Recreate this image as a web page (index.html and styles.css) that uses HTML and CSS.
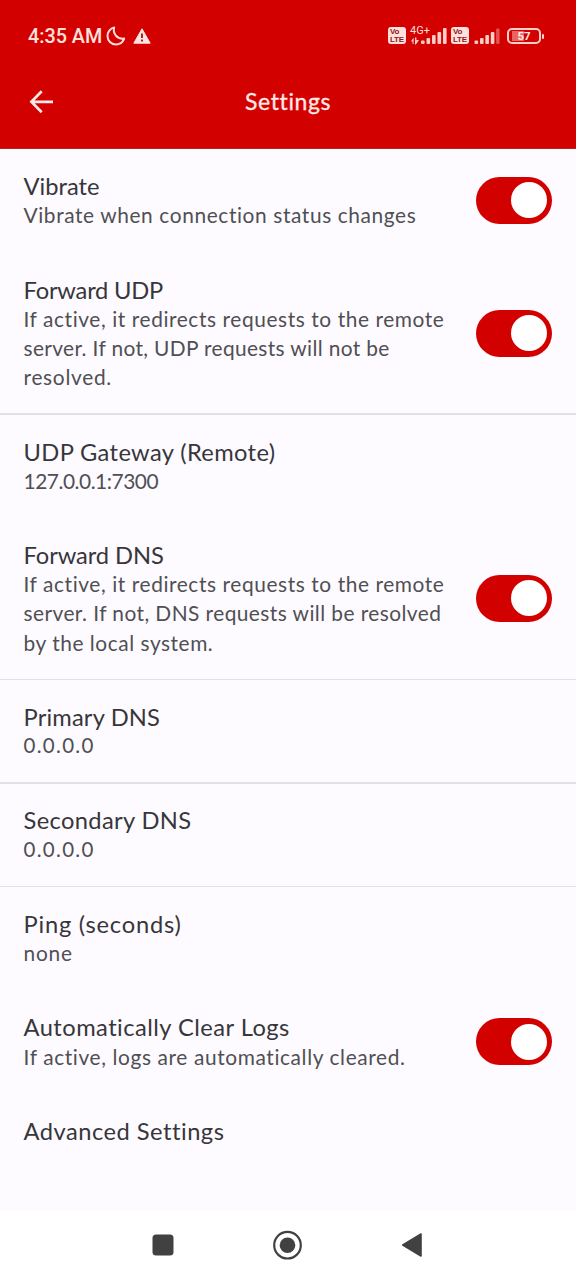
FILE: index.html
```html
<!DOCTYPE html>
<html lang="en">
<head>
<meta charset="utf-8">
<title>Settings</title>
<link rel="stylesheet" href="styles.css">
</head>
<body>
<div class="screen">
  <header class="top">
    <div class="status">
      <span class="clock">4:35 AM</span>
      <svg class="moon" width="20" height="20" viewBox="0 0 20 20"><path d="M8.2 1.4C6.5 6.6 10.6 13.6 18.2 12.6C16.4 17.1 12.8 18.5 9.7 18.4C5.1 18.3 1.6 14.7 1.5 10.2C1.4 6.1 4.2 2.4 8.2 1.4Z" fill="none" stroke="#ffdcd8" stroke-width="2" stroke-linejoin="round"/></svg>
      <svg class="warn" width="18" height="16" viewBox="0 0 18 16"><path d="M9 .8L17.2 15.2H.8Z" fill="#ffe4e1" stroke="#ffe4e1" stroke-linejoin="round"/><path d="M9 5.5V10M9 11.6V13.6" stroke="#a3262a" stroke-width="2"/></svg>
      <span class="spacer"></span>
      <span class="volte"><span>Vo</span><span>LTE</span></span>
      <div class="cell">
        <span class="net">4G+</span>
        <svg width="37" height="19" viewBox="0 0 37 19"><g fill="#ffcdc8"><path d="M0 14.5L2.6 10.5V17H1.6V14.5ZM4 10.5H5.4V13H8L4.9 17.5H4Z"/><rect x="10" y="13.5" width="3.6" height="3.5" rx="1"/><rect x="15.5" y="11" width="3.6" height="6" rx="1"/><rect x="21" y="8" width="3.6" height="9" rx="1"/><rect x="26.5" y="5" width="3.6" height="12" rx="1"/><rect x="32" y="1" width="3.6" height="16" rx="1"/></g></svg>
      </div>
      <span class="volte"><span>Vo</span><span>LTE</span></span>
      <svg class="bars" width="26" height="18" viewBox="0 0 26 18"><g fill="#ffcdc8"><rect x="0.5" y="13.5" width="3.6" height="3.5" rx="1"/><rect x="6" y="11" width="3.6" height="6" rx="1"/><rect x="11.4" y="8" width="3.6" height="9" rx="1"/><rect x="16.8" y="5" width="3.6" height="12" rx="1"/><rect x="22.1" y="1.5" width="3.4" height="15.5" rx="1" opacity=".4"/></g></svg>
      <div class="battery"><span>57</span></div>
    </div>
    <div class="bar">
      <svg class="back" width="26" height="26" viewBox="0 0 26 26"><path d="M13.7 2.3L3.4 12.8L13.7 23.2M3.4 12.8H25" fill="none" stroke="#ffe9e7" stroke-width="2.7"/></svg>
      <h1>Settings</h1>
    </div>
  </header>
  <main class="list">
    <section class="row">
      <div class="text"><h2 class="l1">Vibrate</h2><p class="p1">Vibrate when connection status changes</p></div>
      <span class="toggle"></span>
    </section>
    <section class="row line">
      <div class="text"><h2 class="l2">Forward UDP</h2><p class="p2">If active, it redirects requests to the remote</p><p class="p3">server. If not, UDP requests will not be</p><p class="p4">resolved.</p></div>
      <span class="toggle"></span>
    </section>
    <section class="row">
      <div class="text"><h2 class="l3">UDP Gateway (Remote)</h2><p class="p5">127.0.0.1:7300</p></div>
    </section>
    <section class="row line">
      <div class="text"><h2 class="l4">Forward DNS</h2><p class="p2">If active, it redirects requests to the remote</p><p class="p6">server. If not, DNS requests will be resolved</p><p class="p7">by the local system.</p></div>
      <span class="toggle"></span>
    </section>
    <section class="row line">
      <div class="text"><h2 class="l5">Primary DNS</h2><p class="p8">0.0.0.0</p></div>
    </section>
    <section class="row line">
      <div class="text"><h2 class="l3">Secondary DNS</h2><p class="p8">0.0.0.0</p></div>
    </section>
    <section class="row">
      <div class="text"><h2 class="l6">Ping (seconds)</h2><p class="p9">none</p></div>
    </section>
    <section class="row">
      <div class="text"><h2 class="l7">Automatically Clear Logs</h2><p class="p10">If active, logs are automatically cleared.</p></div>
      <span class="toggle"></span>
    </section>
    <section class="row">
      <div class="text"><h2 class="l8">Advanced Settings</h2></div>
    </section>
  </main>
  <nav class="nav">
    <svg width="22" height="22" viewBox="0 0 22 22"><rect x=".5" y=".5" width="21" height="21" rx="3.5" fill="#414141"/></svg>
    <svg width="30" height="30" viewBox="0 0 30 30"><circle cx="15.5" cy="15.2" r="13.3" fill="none" stroke="#414141" stroke-width="2.2"/><circle cx="15.5" cy="15.2" r="7.8" fill="#414141"/></svg>
    <svg width="22" height="26" viewBox="0 0 22 26"><path d="M1.8 13L20 2V24Z" fill="#414141" stroke="#414141" stroke-width="1.6" stroke-linejoin="round"/></svg>
  </nav>
</div>
</body>
</html>
```
FILE: styles.css
```css
* { box-sizing: border-box; }
body { margin: 0; background: #fdfbff; font-family: Lato, sans-serif; }
h1, h2, p { margin: 0; font-weight: 400; white-space: nowrap; }
svg { display: block; flex: none; }

.screen { width: 576px; height: 1280px; display: flex; flex-direction: column; overflow: hidden; }

.top { height: 149px; flex: none; background: #d30000; border-bottom: 1px solid #b5201f; }
.status { height: 71px; padding: 0 35px 0 28px; display: flex; align-items: center; }
.clock { width: 78px; font: 500 19.8px/24px Roboto, sans-serif; color: #ffe0dc; white-space: nowrap; padding-top: 2px; }
.warn { margin-left: 7px; }
.spacer { flex: 1; }
.volte { width: 18px; height: 17px; border-radius: 3px; background: #ffe0dc; color: #8e1820; display: flex; flex-direction: column; padding: 1px 0 0 2px; font: 700 8px/7.5px "Liberation Sans", sans-serif; letter-spacing: -.2px; }
.cell { position: relative; width: 45px; height: 24px; padding: 3px 0 0 5px; }
.net { position: absolute; left: 4px; top: 1px; font: 400 11px/11px Roboto, sans-serif; color: #ffdcd8; }
.bars { margin: 1px 7px 0 5px; }
.battery { position: relative; width: 34px; height: 16px; border: 2px solid #ffd0cb; border-radius: 5px; background: linear-gradient(90deg, #e8645f 0 50%, transparent 50%); background-clip: content-box; padding: 1px 1px 1px 3px; text-align: center; }
.battery span { display: block; margin: -1px 0 0 -2px; font: 700 11.5px/12px Roboto, sans-serif; color: #ffeae8; }
.battery::after { content: ""; position: absolute; right: -5px; top: 4px; width: 2px; height: 5px; border-radius: 1px; background: #ffd0cb; }

.bar { height: 61px; padding-left: 28px; display: flex; align-items: center; }
.bar h1 { margin: -1px 0 0 191px; font-size: 23px; line-height: 28px; letter-spacing: .62px; color: #ffe9e7; -webkit-text-stroke: .3px #ffe9e7; }

.list { flex: 1; }
.row { display: flex; justify-content: space-between; padding: 24.2px 24px 22.9px 23.5px; position: relative; }
.line::after { content: ""; position: absolute; left: 0; right: 0; bottom: -.6px; height: 1.5px; background: #e3dfe4; }
.toggle { width: 76.5px; height: 47px; flex: none; align-self: center; border-radius: 24px; background: #d30000; padding: 5.5px; display: flex; justify-content: flex-end; margin-top: -2px; }
.toggle::before { content: ""; width: 36px; height: 36px; border-radius: 50%; background: #fff; }
h2 { font-size: 23.7px; line-height: 27.2px; color: #37363a; }
p { font-size: 20.9px; line-height: 29.2px; color: #504f53; }

/* tracking per line */
.l1 { letter-spacing: 0; }
.l2 { letter-spacing: -.2px; }
.l3 { letter-spacing: .36px; }
.l4 { letter-spacing: -.08px; }
.l5 { letter-spacing: .16px; }
.l6 { letter-spacing: .78px; }
.l7 { letter-spacing: .46px; }
.l8 { letter-spacing: .49px; }
.p1 { letter-spacing: .6px; }
.p2 { letter-spacing: .58px; }
.p3 { letter-spacing: .35px; }
.p4 { letter-spacing: .7px; }
.p5 { letter-spacing: -.47px; }
.p6 { letter-spacing: .43px; }
.p7 { letter-spacing: .54px; }
.p8 { font-size: 20.5px; letter-spacing: 1.3px; }
.p9 { letter-spacing: .77px; }
.p10 { letter-spacing: .61px; }

.nav { height: 70px; flex: none; background: #fff; display: flex; align-items: center; padding-left: 152px; }
.nav svg:nth-child(2) { margin-left: 98px; }
.nav svg:nth-child(3) { margin-left: 99px; }
```
